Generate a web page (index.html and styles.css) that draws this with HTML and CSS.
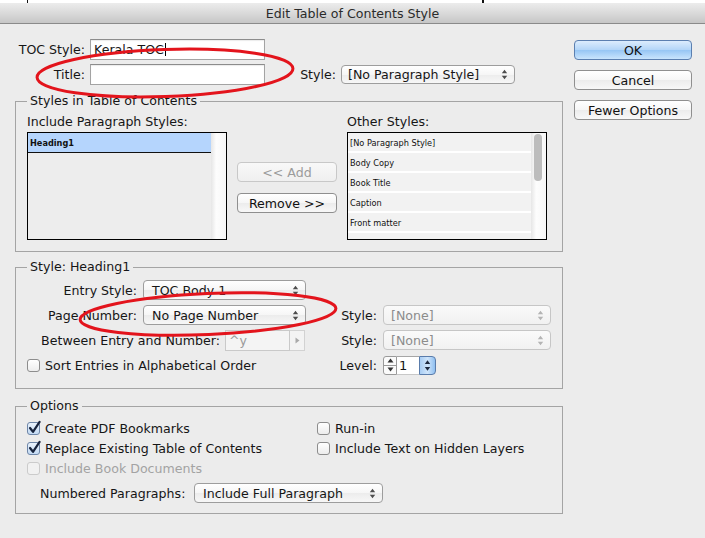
FILE: index.html
```html
<!DOCTYPE html>
<html>
<head>
<meta charset="utf-8">
<title>Edit Table of Contents Style</title>
<link rel="stylesheet" href="styles.css">
</head>
<body>
<div class="desk"><span class="desk-mark"></span><span class="desk-mark thick"></span></div>
<div class="titlebar">Edit Table of Contents Style</div>

<div class="dialog">
  <div class="main">
    <div class="top-row">
      <span class="top-lbl">TOC Style:</span>
      <div class="field top-field">Kerala TOC<span class="caret"></span></div>
    </div>
    <div class="top-row">
      <span class="top-lbl">Title:</span>
      <div class="field top-field"></div>
      <span class="style-lbl">Style:</span>
      <div class="popup pop-title">[No Paragraph Style]<svg class="updown" width="7" height="11" viewBox="0 0 7 11"><path d="M0.8 4.2 L3.5 0.8 L6.2 4.2 Z M0.8 6.8 L3.5 10.2 L6.2 6.8 Z"/></svg></div>
    </div>

    <fieldset class="group g-styles">
      <legend>Styles in Table of Contents</legend>
      <div class="styles-cols">
        <div class="col-list">
          <div class="col-title">Include Paragraph Styles:</div>
          <div class="listbox">
            <div class="list-items">
              <div class="item selected">Heading1</div>
            </div>
            <div class="scrolltrack"></div>
          </div>
        </div>
        <div class="col-buttons">
          <div class="btn disabled">&lt;&lt; Add</div>
          <div class="btn">Remove &gt;&gt;</div>
        </div>
        <div class="col-list">
          <div class="col-title">Other Styles:</div>
          <div class="listbox">
            <div class="list-items">
              <div class="item">[No Paragraph Style]</div>
              <div class="item">Body Copy</div>
              <div class="item">Book Title</div>
              <div class="item">Caption</div>
              <div class="item">Front matter</div>
              <div class="item"></div>
            </div>
            <div class="scrolltrack"><span class="thumb"></span></div>
          </div>
        </div>
      </div>
    </fieldset>

    <fieldset class="group g-format">
      <legend>Style: Heading1</legend>
      <div class="frow">
        <div class="fleft">
          <span class="flabel">Entry Style:</span>
          <div class="popup pop-entry">TOC Body 1<svg class="updown" width="7" height="11" viewBox="0 0 7 11"><path d="M0.8 4.2 L3.5 0.8 L6.2 4.2 Z M0.8 6.8 L3.5 10.2 L6.2 6.8 Z"/></svg></div>
        </div>
      </div>
      <div class="frow">
        <div class="fleft">
          <span class="flabel">Page Number:</span>
          <div class="popup pop-entry">No Page Number<svg class="updown" width="7" height="11" viewBox="0 0 7 11"><path d="M0.8 4.2 L3.5 0.8 L6.2 4.2 Z M0.8 6.8 L3.5 10.2 L6.2 6.8 Z"/></svg></div>
        </div>
        <span class="rlabel">Style:</span>
        <div class="popup pop-right disabled">[None]<svg class="updown" width="7" height="11" viewBox="0 0 7 11"><path d="M0.8 4.2 L3.5 0.8 L6.2 4.2 Z M0.8 6.8 L3.5 10.2 L6.2 6.8 Z"/></svg></div>
      </div>
      <div class="frow">
        <div class="fleft">
          <span class="flabel wide">Between Entry and Number:</span>
          <div class="field sep-field">^y</div>
          <div class="arrowbox"><svg width="5" height="7" viewBox="0 0 5 7"><path d="M0.5 0.5 L4.5 3.5 L0.5 6.5 Z"/></svg></div>
        </div>
        <span class="rlabel">Style:</span>
        <div class="popup pop-right disabled">[None]<svg class="updown" width="7" height="11" viewBox="0 0 7 11"><path d="M0.8 4.2 L3.5 0.8 L6.2 4.2 Z M0.8 6.8 L3.5 10.2 L6.2 6.8 Z"/></svg></div>
      </div>
      <div class="frow">
        <div class="fleft">
          <label class="check"><span class="cb"></span>Sort Entries in Alphabetical Order</label>
        </div>
        <span class="rlabel">Level:</span>
        <div class="level">
          <div class="stepper">
            <span class="half"><svg width="7" height="5" viewBox="0 0 7 5"><path d="M0.5 4.5 L3.5 0.5 L6.5 4.5 Z"/></svg></span>
            <span class="half"><svg width="7" height="5" viewBox="0 0 7 5"><path d="M0.5 0.5 L3.5 4.5 L6.5 0.5 Z"/></svg></span>
          </div>
          <div class="level-field">1</div>
          <div class="blue-stepper"><svg width="7" height="13" viewBox="0 0 7 13"><path d="M0.8 5 L3.5 1.2 L6.2 5 Z M0.8 8 L3.5 11.8 L6.2 8 Z"/></svg></div>
        </div>
      </div>
    </fieldset>

    <fieldset class="group g-options">
      <legend>Options</legend>
      <div class="opt-grid">
        <label class="check"><span class="cb checked"><svg width="14" height="14" viewBox="0 0 14 14"><path d="M3 7 L6 10.8 L12.6 0.8"/></svg></span>Create PDF Bookmarks</label>
        <label class="check"><span class="cb"></span>Run-in</label>
        <label class="check"><span class="cb checked"><svg width="14" height="14" viewBox="0 0 14 14"><path d="M3 7 L6 10.8 L12.6 0.8"/></svg></span>Replace Existing Table of Contents</label>
        <label class="check"><span class="cb"></span>Include Text on Hidden Layers</label>
        <label class="check disabled"><span class="cb"></span>Include Book Documents</label>
      </div>
      <div class="num-row">
        <span class="num-lbl">Numbered Paragraphs:</span>
        <div class="popup pop-num">Include Full Paragraph<svg class="updown" width="7" height="11" viewBox="0 0 7 11"><path d="M0.8 4.2 L3.5 0.8 L6.2 4.2 Z M0.8 6.8 L3.5 10.2 L6.2 6.8 Z"/></svg></div>
      </div>
    </fieldset>
  </div>

  <div class="side">
    <div class="pbtn default">OK</div>
    <div class="pbtn">Cancel</div>
    <div class="pbtn">Fewer Options</div>
  </div>
</div>

<!-- hand-drawn red marker rings -->
<svg class="marker" width="705" height="538" viewBox="0 0 705 538">
  <ellipse cx="165" cy="73" rx="128" ry="23.5" transform="rotate(-2 165 73)"/>
  <ellipse cx="208" cy="314" rx="128" ry="20.5" transform="rotate(-2.5 208 314)"/>
</svg>
</body>
</html>
```

FILE: styles.css
```css
* { box-sizing: border-box; }

html, body { margin: 0; padding: 0; }

body {
  width: 705px;
  height: 538px;
  overflow: hidden;
  position: relative;
  background: #ececec;
  font-family: "DejaVu Sans", "Liberation Sans", sans-serif;
  font-size: 12.6px;
  color: #161616;
}

/* strip of the window behind the sheet */
.desk {
  height: 3px;
  background: #fff;
  display: flex;
}
.desk-mark {
  width: 1px;
  height: 3px;
  background: #111;
  margin-left: 27px;
}
.desk-mark.thick {
  width: 2px;
  margin-left: 454px;
}

.titlebar {
  height: 21px;
  background: linear-gradient(#ececec, #d6d6d6 60%, #c6c6c6);
  border-bottom: 1px solid #8a8a8a;
  text-align: center;
  line-height: 22px;
  color: #2b2b2b;
}

.dialog {
  display: flex;
  gap: 11px;
  padding: 15px 0 0 15px;
}

.main { width: 548px; }

.side {
  width: 118px;
  padding-top: 1px;
  display: flex;
  flex-direction: column;
  gap: 10px;
}

/* ---------- top rows ---------- */
.top-row {
  height: 21px;
  display: flex;
  align-items: center;
}
.top-row + .top-row { margin-top: 4px; }

.top-lbl {
  width: 70px;
  text-align: right;
  margin-right: 5px;
}
.style-lbl {
  width: 71px;
  text-align: right;
  margin-right: 5px;
}

.field {
  height: 21px;
  background: #fff;
  border: 1px solid #a3a3a3;
  border-top-color: #8c8c8c;
  box-shadow: inset 0 1px 1px rgba(0, 0, 0, 0.08);
  padding-left: 3px;
  line-height: 19px;
  display: flex;
  align-items: center;
}
.top-field { width: 175px; }

.caret {
  width: 1px;
  height: 13px;
  background: #000;
  margin-left: 1px;
}

/* ---------- pop-up menus ---------- */
.popup {
  position: relative;
  height: 19px;
  border: 1px solid #9d9d9d;
  border-radius: 4px;
  background: linear-gradient(#ffffff, #f6f6f6 50%, #ececec 51%, #f7f7f7);
  padding-left: 7px;
  line-height: 17px;
  display: flex;
  align-items: center;
  justify-content: space-between;
  padding-right: 6px;
  white-space: nowrap;
}
.popup .updown { fill: #4d4d4d; flex: none; }
.popup.disabled {
  color: #8c8c8c;
  border-color: #c6c6c6;
  background: linear-gradient(#fafafa, #f1f1f1);
}
.popup.disabled .updown { fill: #b4b4b4; }

.pop-title { width: 174px; padding-left: 6px; }
.pop-entry { width: 163px; height: 20px; padding-left: 8px; }
.pop-right { width: 168px; height: 20px; }
.pop-num { width: 189px; height: 20px; padding-left: 8px; }

/* ---------- group boxes ---------- */
.group {
  margin: 0;
  min-width: 0;
  border: 1px solid #a4a4a4;
  padding: 7px 11px 11px 11px;
}
.group legend {
  padding: 0 3px;
  line-height: 14px;
}
.g-styles { margin-top: 9px; }
.g-format { margin-top: 8px; padding-top: 6px; padding-bottom: 13px; }
.g-options { margin-top: 10px; padding-top: 5px; padding-bottom: 10px; }

/* styles in table of contents */
.styles-cols {
  display: flex;
  gap: 10px;
}
.col-list { width: 200px; }
.col-title {
  line-height: 14px;
  margin-bottom: 3px;
  white-space: nowrap;
}
.listbox {
  height: 108px;
  border: 1px solid #000;
  background: #ededed;
  display: flex;
  overflow: hidden;
}
.list-items { flex: 1; }
.item {
  height: 20px;
  background: #f2f2f2;
  border-bottom: 2px solid #fff;
  font-size: 8.2px;
  line-height: 20px;
  padding-left: 2px;
  color: #111;
}
.item.selected {
  background: #b5d5fd;
  border-bottom: 1px solid #111;
  font-weight: bold;
  line-height: 20px;
}
.scrolltrack {
  width: 15px;
  position: relative;
  background: linear-gradient(90deg, #e6e6e6, #fdfdfd 35%, #f6f6f6);
}
.thumb {
  position: absolute;
  left: 3px;
  top: 1px;
  width: 8px;
  height: 47px;
  border-radius: 4px;
  background: #bcbcbc;
}

.col-buttons {
  width: 100px;
  padding-top: 47px;
  display: flex;
  flex-direction: column;
  gap: 11px;
}

.btn,
.pbtn {
  height: 20px;
  border: 1px solid #8f8f8f;
  border-radius: 4px;
  background: linear-gradient(#ffffff, #f6f6f6 50%, #ececec 51%, #f8f8f8);
  text-align: center;
  line-height: 19px;
  color: #111;
  white-space: nowrap;
}
.btn.disabled {
  color: #9b9b9b;
  border-color: #c8c8c8;
  background: linear-gradient(#f8f8f8, #efefef);
}
.pbtn.default {
  border-color: #5b7fb0;
  background: linear-gradient(#dcecfd, #b2d5f8 50%, #96c5f4 51%, #c9e4fd);
}

/* style: heading1 rows */
.frow {
  height: 20px;
  display: flex;
  align-items: center;
}
.frow + .frow { margin-top: 5px; }

.fleft {
  width: 310px;
  display: flex;
  align-items: center;
  flex: none;
}
.flabel {
  width: 110px;
  text-align: right;
  margin-right: 6px;
  white-space: nowrap;
}
.flabel.wide {
  width: 193px;
  margin-right: 5px;
}
.rlabel {
  width: 40px;
  text-align: right;
  margin-right: 6px;
}

.sep-field {
  width: 65px;
  height: 21px;
  color: #9a9a9a;
  background: #f4f4f4;
  border-color: #c9c9c9;
  box-shadow: none;
}
.arrowbox {
  width: 15px;
  height: 21px;
  border: 1px solid #d2d2d2;
  border-left: none;
  background: #f3f3f3;
  display: flex;
  align-items: center;
  justify-content: center;
}
.arrowbox svg { fill: #a9a9a9; }

/* checkboxes */
.check {
  display: flex;
  align-items: center;
  height: 20px;
  white-space: nowrap;
}
.cb {
  width: 13px;
  height: 13px;
  flex: none;
  margin-right: 5px;
  border: 1px solid #8d8d8d;
  border-radius: 3px;
  background: linear-gradient(#ffffff, #ededed);
  position: relative;
}
.cb.checked {
  border-color: #6e86a8;
  background: linear-gradient(#e9f2fc, #c3daf3);
}
.cb svg {
  position: absolute;
  left: -1px;
  top: -2px;
  overflow: visible;
}
.cb svg path {
  fill: none;
  stroke: #17233c;
  stroke-width: 2.2;
  stroke-linecap: round;
  stroke-linejoin: round;
}
.check.disabled { color: #a3a3a3; }
.check.disabled .cb {
  border-color: #cbcbcb;
  background: #f1f1f1;
}

/* level control */
.level {
  display: flex;
  height: 19px;
}
.stepper {
  width: 14px;
  border: 1px solid #9a9a9a;
  border-radius: 3px 0 0 3px;
  background: #fbfbfb;
  display: flex;
  flex-direction: column;
}
.stepper .half {
  flex: 1;
  display: flex;
  align-items: center;
  justify-content: center;
}
.stepper .half + .half { border-top: 1px solid #9a9a9a; }
.stepper svg { fill: #333; }
.level-field {
  width: 22px;
  background: #fff;
  border-top: 1px solid #a6a6a6;
  border-bottom: 1px solid #c8c8c8;
  padding-left: 2px;
  line-height: 17px;
  font-size: 13px;
}
.blue-stepper {
  width: 17px;
  border: 1px solid #5a7cab;
  border-radius: 0 4px 4px 0;
  background: linear-gradient(90deg, #a8cdf4, #cfe5fb 50%, #8fbff0);
  display: flex;
  align-items: center;
  justify-content: center;
}
.blue-stepper svg { fill: #1d2a40; }

/* options */
.opt-grid {
  display: grid;
  grid-template-columns: 290px 1fr;
  grid-auto-rows: 20px;
}
.num-row {
  margin-top: 5px;
  padding-left: 13px;
  height: 20px;
  display: flex;
  align-items: center;
}
.num-lbl { width: 154px; }

/* red marker rings drawn over the sheet */
.marker {
  position: absolute;
  left: 0;
  top: 0;
  pointer-events: none;
}
.marker ellipse {
  fill: none;
  stroke: #e3141c;
  stroke-width: 3;
}
```
